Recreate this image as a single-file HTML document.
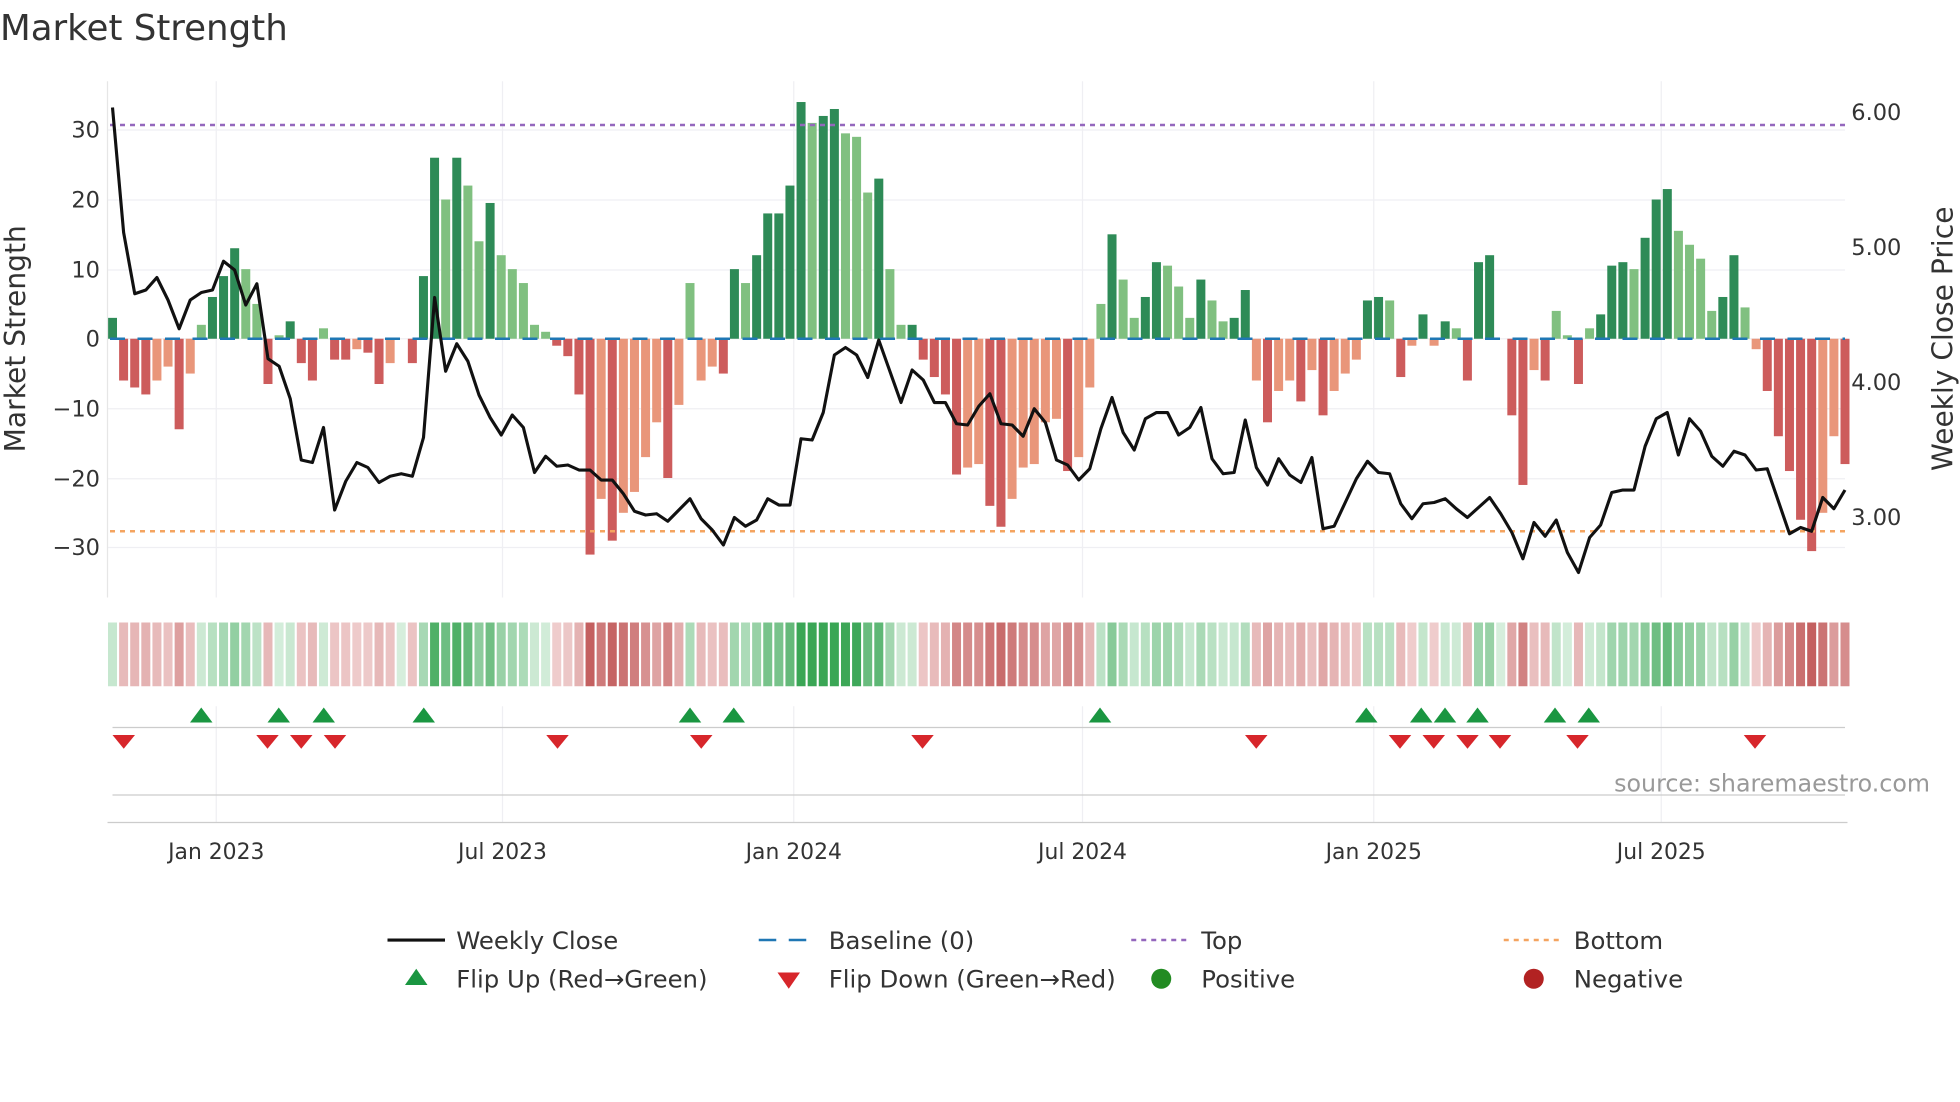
<!DOCTYPE html>
<html><head><meta charset="utf-8"><style>
html,body{margin:0;padding:0;background:#fff;}
svg{display:block;font-family:"DejaVu Sans","Liberation Sans",sans-serif;}
</style></head><body>
<svg id="s" width="1960" height="1102" viewBox="0 0 1568 881.6" xmlns="http://www.w3.org/2000/svg">
<rect width="1568" height="882" fill="#fff"/>
<text x="0" y="32" font-size="28.5" fill="#333">Market Strength</text>
<g id="grid" stroke="#efeff3" stroke-width="1"></g>
<g id="bars"></g>
<g id="heat"></g>
<line x1="88" x2="1476" y1="100" y2="100" stroke="#9467bd" stroke-width="2" stroke-dasharray="4,4"/>
<line x1="88" x2="1476" y1="425" y2="425" stroke="#f4a460" stroke-width="2" stroke-dasharray="4,4"/>
<line x1="88" x2="1476" y1="271" y2="271" stroke="#1f77b4" stroke-width="2" stroke-dasharray="12,10"/>
<polyline id="line" fill="none" stroke="#111" stroke-width="2.5" stroke-linejoin="round"/>
<line x1="86" x2="86" y1="65" y2="478" stroke="#e6e6e6"/>
<g font-size="18" fill="#333" text-anchor="end">
<text x="80" y="110">30</text><text x="80" y="166">20</text><text x="80" y="222">10</text><text x="80" y="277">0</text>
<text x="80" y="333">−10</text><text x="80" y="389">−20</text><text x="80" y="444">−30</text>
</g>
<g font-size="18" fill="#333">
<text x="1481" y="96">6.00</text><text x="1481" y="204">5.00</text><text x="1481" y="312">4.00</text><text x="1481" y="420">3.00</text>
</g>
<text transform="translate(20,271) rotate(-90)" font-size="22.5" fill="#333" text-anchor="middle">Market Strength</text>
<text transform="translate(1562,271) rotate(-90)" font-size="22.5" fill="#333" text-anchor="middle">Weekly Close Price</text>
<line x1="90" x2="1476" y1="582" y2="582" stroke="#ccc"/>
<line x1="90" x2="1476" y1="636" y2="636" stroke="#ccc"/>
<line x1="86" x2="1478" y1="658" y2="658" stroke="#ccc"/>
<g id="flips"></g>
<text x="1544" y="633" font-size="19" fill="#999" text-anchor="end">source: sharemaestro.com</text>
<g font-size="17.5" fill="#333" text-anchor="middle">
<text x="173" y="687">Jan 2023</text><text x="402" y="687">Jul 2023</text><text x="635" y="687">Jan 2024</text>
<text x="866" y="687">Jul 2024</text><text x="1099" y="687">Jan 2025</text><text x="1329" y="687">Jul 2025</text>
</g>
<g font-size="19.5" fill="#333">
<line x1="310" x2="356" y1="752" y2="752" stroke="#111" stroke-width="2.5"/><text x="365" y="759">Weekly Close</text>
<line x1="607" x2="652" y1="752" y2="752" stroke="#1f77b4" stroke-width="2" stroke-dasharray="14,10"/><text x="663" y="759">Baseline (0)</text>
<line x1="905" x2="950" y1="752" y2="752" stroke="#9467bd" stroke-width="2" stroke-dasharray="4,4"/><text x="961" y="759">Top</text>
<line x1="1203" x2="1248" y1="752" y2="752" stroke="#f4a460" stroke-width="2" stroke-dasharray="4,4"/><text x="1259" y="759">Bottom</text>
<polygon points="324,788 342,788 333,775" fill="#1a9641"/><text x="365" y="790">Flip Up (Red→Green)</text>
<polygon points="622,778 640,778 631,791" fill="#d7262b"/><text x="663" y="790">Flip Down (Green→Red)</text>
<circle cx="929" cy="783" r="8" fill="#228b22"/><text x="961" y="790">Positive</text>
<circle cx="1227" cy="783" r="8" fill="#b22222"/><text x="1259" y="790">Negative</text>
</g>
</svg>
<script>
var NS="http://www.w3.org/2000/svg";
function el(p,t,a){var e=document.createElementNS(NS,t);for(var k in a)e.setAttribute(k,a[k]);p.appendChild(e);return e;}
var v=[3,-6,-7,-8,-6,-4,-13,-5,2,6,9,13,10,5,-6.5,0.5,2.5,-3.5,-6,1.5,-3,-3,-1.5,-2,-6.5,-3.5,0,-3.5,9,26,20,26,22,14,19.5,12,10,8,2,1,-1,-2.5,-8,-31,-23,-29,-25,-22,-17,-12,-20,-9.5,8,-6,-4,-5,10,8,12,18,18,22,34,31,32,33,29.5,29,21,23,10,2,2,-3,-5.5,-8,-19.5,-18.5,-18,-24,-27,-23,-18.5,-18,-12,-11.5,-19,-17,-7,5,15,8.5,3,6,11,10.5,7.5,3,8.5,5.5,2.5,3,7,-6,-12,-7.5,-6,-9,-4.5,-11,-7.5,-5,-3,5.5,6,5.5,-5.5,-1,3.5,-1,2.5,1.5,-6,11,12,0,-11,-21,-4.5,-6,4,0.5,-6.5,1.5,3.5,10.5,11,10,14.5,20,21.5,15.5,13.5,11.5,4,6,12,4.5,-1.5,-7.5,-14,-19,-26,-30.5,-25,-14,-18];
var ly=[86,186,235,232,222,240,263,240,234,232,209,216,244,227,287,293,319,368,370,342,408,385,370,374,386,381,379,381,350,238,297,275,289,316,334,348,332,342,378,365,373,372,376,376,384,384,395,409,412,411,417,408,399,415,424,436,414,421,416,399,404,404,351,352,330,284,278,284,302,272,297,322,296,304,322,322,339,340,325,315,339,340,349,327,338,368,372,384,375,343,318,346,360,335,330,330,348,342,326,367,379,378,336,374,388,367,380,386,366,423,421,402,383,369,378,379,403,415,403,402,399,407,414,406,398,411,426,447,418,429,416,442,458,430,420,394,392,392,357,335,330,364,335,345,365,373,361,364,376,375,401,427,422,425,398,407,392];
var X0=90,DX=(1476-90)/156,Z=271,K=5.57;
var g=document.getElementById('grid');
[104,160,216,271,327,383,438].forEach(function(y){el(g,'line',{x1:86,x2:1476,y1:y,y2:y});});
[173,402,635,866,1099,1329].forEach(function(x){el(g,'line',{x1:x,x2:x,y1:65,y2:478});el(g,'line',{x1:x,x2:x,y1:565,y2:658});});
var b=document.getElementById('bars'),h=document.getElementById('heat');
function mix(a,c,t){return 'rgb('+[0,1,2].map(function(i){return Math.round(a[i]+(c[i]-a[i])*t);}).join(',')+')';}
for(var i=0;i<v.length;i++){
 var x=X0+DX*i,val=v[i],p=i?v[i-1]:0,dark=Math.abs(val)>=Math.abs(p);
 var col=val>=0?(dark?'#2e8b57':'#80c080'):(dark?'#cd5c5c':'#e9967a');
 var hgt=Math.abs(val)*K,y=val>=0?Z-hgt:Z;
 if(hgt>0.3)el(b,'rect',{x:x-3.6,y:y,width:7.2,height:hgt,fill:col});
 var t=Math.min(1,Math.abs(val)/30);
 var hc=val>=0?mix([214,238,220],[58,166,85],t):mix([240,208,208],[196,96,96],t);
 el(h,'rect',{x:x-3.6,y:498,width:7.2,height:51,fill:hc});
}
document.getElementById('line').setAttribute('points',ly.map(function(y,i){return (X0+DX*i).toFixed(1)+','+y;}).join(' '));
var f=document.getElementById('flips');
[161,223,259,339,552,587,880,1093,1137,1156,1182,1244,1271].forEach(function(x){el(f,'polygon',{points:(x-9)+',578 '+(x+9)+',578 '+x+',566',fill:'#1a9641'});});
[99,214,241,268,446,561,738,1005,1120,1147,1174,1200,1262,1404].forEach(function(x){el(f,'polygon',{points:(x-9)+',588 '+(x+9)+',588 '+x+',599',fill:'#d7262b'});});
</script>
</body></html>
